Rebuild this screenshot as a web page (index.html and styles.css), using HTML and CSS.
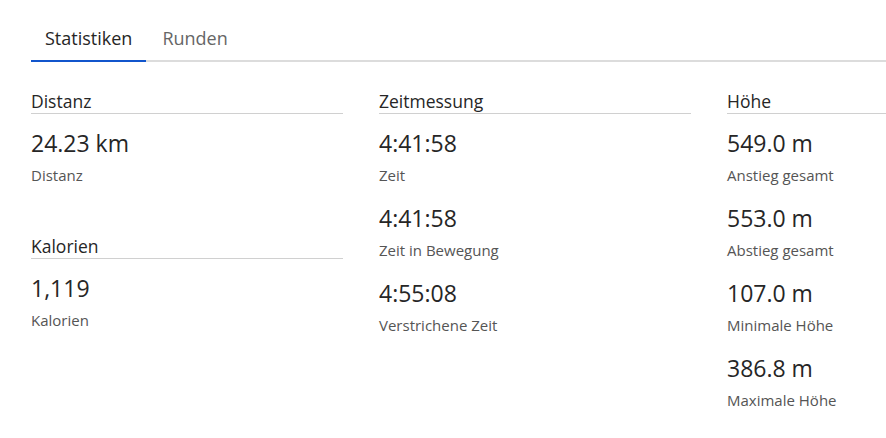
FILE: index.html
```html
<!DOCTYPE html>
<html lang="de">
  <head>
    <meta charset="UTF-8" />
    <meta name="viewport" content="width=device-width, initial-scale=1.0" />
    <title>Statistiken</title>
    <link rel="stylesheet" href="styles.css">
  </head>
  <body>
    <nav class="tabs">
      <a class="tab active" href="#">Statistiken</a>
      <a class="tab" href="#">Runden</a>
    </nav>

    <div class="stats">
      <div class="col">
        <section class="group">
          <h3>Distanz</h3>
          <div class="item">
            <div class="value">24.23 km</div>
            <div class="label">Distanz</div>
          </div>
        </section>
        <section class="group">
          <h3>Kalorien</h3>
          <div class="item">
            <div class="value">1,119</div>
            <div class="label">Kalorien</div>
          </div>
        </section>
      </div>

      <div class="col">
        <section class="group">
          <h3>Zeitmessung</h3>
          <div class="item">
            <div class="value">4:41:58</div>
            <div class="label">Zeit</div>
          </div>
          <div class="item">
            <div class="value">4:41:58</div>
            <div class="label">Zeit in Bewegung</div>
          </div>
          <div class="item">
            <div class="value">4:55:08</div>
            <div class="label">Verstrichene Zeit</div>
          </div>
        </section>
      </div>

      <div class="col">
        <section class="group">
          <h3>Höhe</h3>
          <div class="item">
            <div class="value">549.0 m</div>
            <div class="label">Anstieg gesamt</div>
          </div>
          <div class="item">
            <div class="value">553.0 m</div>
            <div class="label">Abstieg gesamt</div>
          </div>
          <div class="item">
            <div class="value">107.0 m</div>
            <div class="label">Minimale Höhe</div>
          </div>
          <div class="item">
            <div class="value">386.8 m</div>
            <div class="label">Maximale Höhe</div>
          </div>
        </section>
      </div>
    </div>
  </body>
</html>
```

FILE: styles.css
```css
/* Aktivitaet - Statistiken */
body {
    margin: 0;
    padding: 26px 0 0 31px;
    font-family: "Open Sans", "Noto Sans", Arial, sans-serif;
    color: #262626;
    background: #fff;
    overflow: hidden;
}

.tabs {
    display: flex;
    gap: 2px;
    border-bottom: 2px solid #dcdcdc;
}

.tab {
    padding: 0 14px 10px;
    font-size: 18px;
    line-height: 24px;
    color: #666;
    text-decoration: none;
    border-bottom: 2px solid transparent;
    margin-bottom: -2px;
}

.tab.active {
    color: #262626;
    border-bottom-color: #1155cc;
}

.stats {
    display: grid;
    grid-template-columns: 312px 312px minmax(0, 1fr);
    column-gap: 36px;
    padding-top: 27px;
}

.group {
    margin-bottom: 49px;
}

.group h3 {
    margin: 0 0 14px;
    font-size: 17.5px;
    font-weight: normal;
    line-height: 24px;
    border-bottom: 1px solid #d0d0d0;
}

.item {
    margin-bottom: 18px;
}

.value {
    font-size: 23px;
    line-height: 30px;
    white-space: nowrap;
}

.label {
    margin-top: 7px;
    font-size: 15px;
    line-height: 20px;
    color: #555;
    white-space: nowrap;
}
```
